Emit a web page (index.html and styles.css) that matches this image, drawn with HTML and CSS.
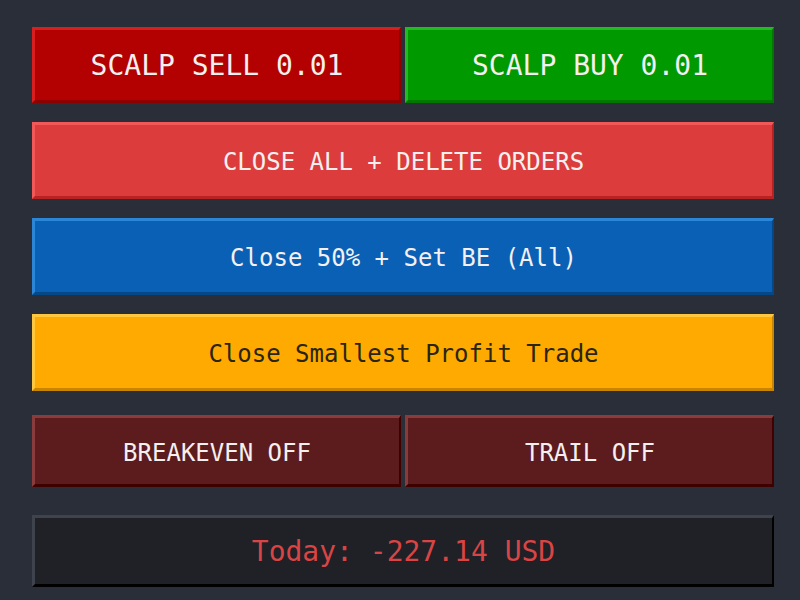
FILE: index.html
```html
<html>
  <head>
    <title>Scalp Panel</title>
    <link rel="stylesheet" href="styles.css">
  </head>
<body>
  <div class="panel">
    <div class="row pair">
      <button class="btn big sell">SCALP SELL 0.01</button>
      <button class="btn big buy">SCALP BUY 0.01</button>
    </div>
    <button class="btn closeall">CLOSE ALL + DELETE ORDERS</button>
    <button class="btn half">Close 50% + Set BE (All)</button>
    <button class="btn smallest">Close Smallest Profit Trade</button>
    <div class="row pair toggles">
      <button class="btn toggle">BREAKEVEN OFF</button>
      <button class="btn toggle">TRAIL OFF</button>
    </div>
    <div class="today">Today: -227.14 USD</div>
  </div>
</body>
</html>
```
FILE: styles.css
```css
html, body { margin:0; height:100%; }
body { background:#2a2e39; font-family:"DejaVu Sans Mono", "Liberation Mono", monospace; }

.panel { display:flex; flex-direction:column; gap:19px; width:742px; padding:27px 0 0 32px; }

.row.pair { display:grid; grid-template-columns:1fr 1fr; gap:4px; }
.row.toggles { margin-top:5px; }

.btn { box-sizing:border-box; height:77px; margin:0; padding:3px 0 0; border-style:solid; border-width:3px 2px 3px 3px;
       font-family:inherit; font-size:24px; color:#f4f0f0; text-align:center; cursor:pointer; }
.btn.big { font-size:28px; height:76px; padding-top:1px; }

.sell { background:#b30000; border-color:#d81e1e #8c0000 #8c0000 #d81e1e; }
.buy  { background:#009900; border-color:#22bb22 #007800 #007800 #22bb22; }
.closeall { background:#dc3c3c; border-color:#f25858 #b82222 #b82222 #f25858; }
.half { background:#0a60b5; border-color:#2c86d8 #054888 #054888 #2c86d8; }
.smallest { background:#ffaa00; border-color:#ffc640 #c98500 #c98500 #ffc640; color:#2a2510; }
.toggle { height:72px; background:#5c1b1d; border-color:#8a3c3c #3f0000 #3f0000 #8a3c3c; }

.today { box-sizing:border-box; height:72px; margin-top:9px; display:flex; align-items:center; justify-content:center;
         background:#1f2126; border-style:solid; border-width:3px 2px 3px 3px; border-color:#3e434d #000 #000 #3e434d;
         font-size:28px; color:#d94444; }
```
